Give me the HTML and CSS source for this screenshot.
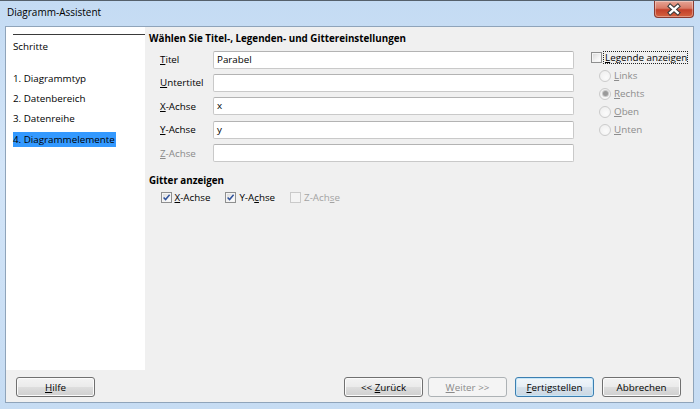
FILE: index.html
```html
<!DOCTYPE html>
<html lang="de">
<head>
<meta charset="utf-8">
<title>Diagramm-Assistent</title>
<link rel="stylesheet" href="styles.css">
</head>
<body>
<div class="window">
  <div class="titlebar">
    <span class="title">Diagramm-Assistent</span>
    <div class="close">
      <svg width="40" height="17" viewBox="0 0 40 17">
        <path d="M16 5 L24 12 M24 5 L16 12" stroke="#3a3a3a" stroke-width="4.6" stroke-linecap="square" fill="none"/>
        <path d="M16 5 L24 12 M24 5 L16 12" stroke="#ffffff" stroke-width="2.4" stroke-linecap="square" fill="none"/>
      </svg>
    </div>
  </div>
  <div class="client">
    <div class="main">
      <div class="steps">
        <div class="steps-head">Schritte</div>
        <ul class="step-list">
          <li>1. Diagrammtyp</li>
          <li>2. Datenbereich</li>
          <li>3. Datenreihe</li>
          <li class="active"><span>4. Diagrammelemente</span></li>
        </ul>
      </div>
      <div class="content">
        <div class="heading">Wählen Sie Titel-, Legenden- und Gittereinstellungen</div>
        <div class="top">
          <div class="fields">
            <div class="row"><label><u>T</u>itel</label><div class="input">Parabel</div></div>
            <div class="row"><label><u>U</u>ntertitel</label><div class="input"></div></div>
            <div class="row"><label><u>X</u>-Achse</label><div class="input">x</div></div>
            <div class="row"><label><u>Y</u>-Achse</label><div class="input">y</div></div>
            <div class="row disabled"><label><u>Z</u>-Achse</label><div class="input"></div></div>
          </div>
          <div class="legend">
            <div class="legend-check">
              <span class="box"></span>
              <span class="focus"><u>L</u>egende anzeigen</span>
            </div>
            <div class="radio"><span class="dot"></span><span><u>L</u>inks</span></div>
            <div class="radio checked"><span class="dot"></span><span><u>R</u>echts</span></div>
            <div class="radio"><span class="dot"></span><span><u>O</u>ben</span></div>
            <div class="radio"><span class="dot"></span><span><u>U</u>nten</span></div>
          </div>
        </div>
        <div class="heading grid-head">Gitter anzeigen</div>
        <div class="grid-opts">
          <div class="check checked"><span class="box"><svg width="9" height="9" viewBox="0 0 9 9"><path d="M1.6 4.4 L3.6 6.6 L7.6 1.8" stroke="#31539c" stroke-width="1.5" fill="none"/></svg></span><span><u>X</u>-Achse</span></div>
          <div class="check checked"><span class="box"><svg width="9" height="9" viewBox="0 0 9 9"><path d="M1.6 4.4 L3.6 6.6 L7.6 1.8" stroke="#31539c" stroke-width="1.5" fill="none"/></svg></span><span>Y-A<u>c</u>hse</span></div>
          <div class="check disabled"><span class="box"></span><span>Z-Ach<u>s</u>e</span></div>
        </div>
      </div>
    </div>
    <div class="footer">
      <button class="btn"><u>H</u>ilfe</button>
      <div class="spacer"></div>
      <button class="btn">&lt;&lt; <u>Z</u>urück</button>
      <button class="btn disabled-btn"><u>W</u>eiter &gt;&gt;</button>
      <button class="btn focused"><u>F</u>ertigstellen</button>
      <button class="btn">Abbrechen</button>
    </div>
  </div>
</div>
</body>
</html>
```
FILE: styles.css
```css
* { box-sizing: border-box; }
html, body { margin: 0; padding: 0; }
body {
  width: 700px;
  height: 409px;
  overflow: hidden;
  font-family: "Open Sans", "Noto Sans", sans-serif;
  font-size: 9.8px;
  color: #000;
  background: #c9def4;
}
u { text-decoration: underline; text-underline-offset: 1px; }

.window {
  height: 409px;
  display: flex;
  flex-direction: column;
  border-top: 1px solid #55606b;
  background: linear-gradient(180deg, #c4dbf3 0%, #d3e5f8 40%, #c6dcf3 100%);
}

.titlebar {
  height: 25px;
  display: flex;
  align-items: flex-start;
  padding-left: 7px;
}
.title {
  font-size: 10px;
  line-height: 25px;
  margin-top: -1px;
  color: #000;
}
.close {
  margin-left: auto;
  margin-right: 6px;
  width: 40px;
  height: 17px;
  border: 1px solid #8a3a30;
  border-top: none;
  border-radius: 0 0 4px 4px;
  background: linear-gradient(180deg, #e6a596 0%, #d97a66 45%, #c3402a 55%, #d4623f 100%);
  box-shadow: inset 0 0 0 1px rgba(255,255,255,0.35);
  display: flex;
}
.close svg { display: block; }

.client {
  flex: 1;
  margin: 0 6px 6px 5px;
  border: 1px solid #8fa4ba;
  background: #f0f0f0;
  display: flex;
  flex-direction: column;
}

.main {
  height: 343px;
  display: flex;
}

.steps {
  width: 139px;
  background: #fff;
  padding-top: 7px;
}
.steps-head {
  margin-left: 7px;
  border-top: 1px solid #3a3a3a;
  padding-top: 3.5px;
  line-height: 15px;
}
.step-list {
  list-style: none;
  margin: 17px 0 0 0;
  padding: 0 0 0 7px;
  display: flex;
  flex-direction: column;
  gap: 5.4px;
}
.step-list li { line-height: 15px; height: 15px; }
.step-list li.active span {
  display: inline-block;
  background: #3399ff;
  padding-right: 1px;
}

.content {
  flex: 1;
  padding: 4px 0 0 4px;
}
.heading {
  font-weight: 700;
  line-height: 15px;
  font-size: 9.8px;
}

.top {
  display: flex;
  margin-top: 4.5px;
}
.fields {
  margin-left: 11px;
  display: flex;
  flex-direction: column;
  gap: 5.4px;
}
.row {
  display: flex;
  align-items: center;
  height: 18px;
}
.row label {
  width: 53px;
}
.row.disabled label { color: #8b8b8b; }
.input {
  width: 361px;
  height: 18px;
  background: #fff;
  border: 1px solid #c9c9c9;
  border-top-color: #b3b3b3;
  border-radius: 2px;
  padding-left: 3px;
  line-height: 16px;
}

.legend {
  margin-left: 17px;
  display: flex;
  flex-direction: column;
}
.legend-check {
  display: flex;
  align-items: center;
  height: 15px;
  margin-top: -0.5px;
  margin-bottom: 1.7px;
}
.box {
  width: 11px;
  height: 11px;
  border: 1px solid #8e8f8f;
  background: linear-gradient(135deg, #d6d6d6 0%, #f4f4f4 60%, #ffffff 100%);
  box-shadow: inset 0 0 0 1px #f4f4f4;
  display: flex;
  align-items: center;
  justify-content: center;
  flex: none;
}
.focus {
  margin-left: 1px;
  padding: 0 1px 0 2px;
  outline: 1px dotted #222;
  outline-offset: -1px;
  line-height: 13px;
  white-space: nowrap;
}
.radio {
  display: flex;
  align-items: center;
  height: 18px;
  padding-left: 8px;
  color: #8d8d8d;
}
.dot {
  width: 12px;
  height: 12px;
  border-radius: 50%;
  border: 1px solid #cbcbcb;
  background: radial-gradient(circle at 60% 65%, #fbfbfb 0%, #ececec 100%);
  margin-right: 3px;
  display: flex;
  align-items: center;
  justify-content: center;
}
.radio.checked .dot::after {
  content: "";
  width: 5px;
  height: 5px;
  border-radius: 50%;
  background: #9a9a9a;
  box-shadow: 0 0 0 1px #c8c8c8;
}

.grid-head { margin-top: 10.8px; }
.grid-opts {
  display: flex;
  margin-top: 2.5px;
  margin-left: 11.5px;
  height: 15px;
  align-items: center;
}
.check {
  display: flex;
  align-items: center;
  margin-right: 15px;
}
.check .box { margin-right: 3px; }
.check.disabled { color: #a3a3a3; }
.check.disabled .box {
  border-color: #cacaca;
  background: #f4f4f4;
  box-shadow: none;
}

.footer {
  flex: 1;
  display: flex;
  align-items: flex-start;
  padding: 7px 12px 0 10px;
}
.spacer { flex: 1; }
.btn {
  font-family: "Open Sans", "Noto Sans", sans-serif;
  font-size: 9.8px;
  color: #000;
  width: 79px;
  height: 20px;
  padding: 0;
  border: 1px solid #707070;
  border-radius: 3px;
  background: linear-gradient(180deg, #f3f3f3 0%, #ebebeb 48%, #dddddd 52%, #cfcfcf 100%);
  box-shadow: inset 0 0 0 1px #fbfbfb;
  line-height: 17px;
  text-align: center;
}
.btn + .btn { margin-left: 8px; }
.btn.disabled-btn {
  margin-left: 5px;
  border-color: #adb2b5;
  background: #f4f4f4;
  box-shadow: none;
  color: #8a8a8a;
}
.btn.focused {
  border-color: #3c7fb1;
  background: linear-gradient(180deg, #f1f6fa 0%, #e6eef5 48%, #d6e1eb 52%, #cbd7e2 100%);
  box-shadow: inset 0 0 0 1px #c6e6f8;
}
```
